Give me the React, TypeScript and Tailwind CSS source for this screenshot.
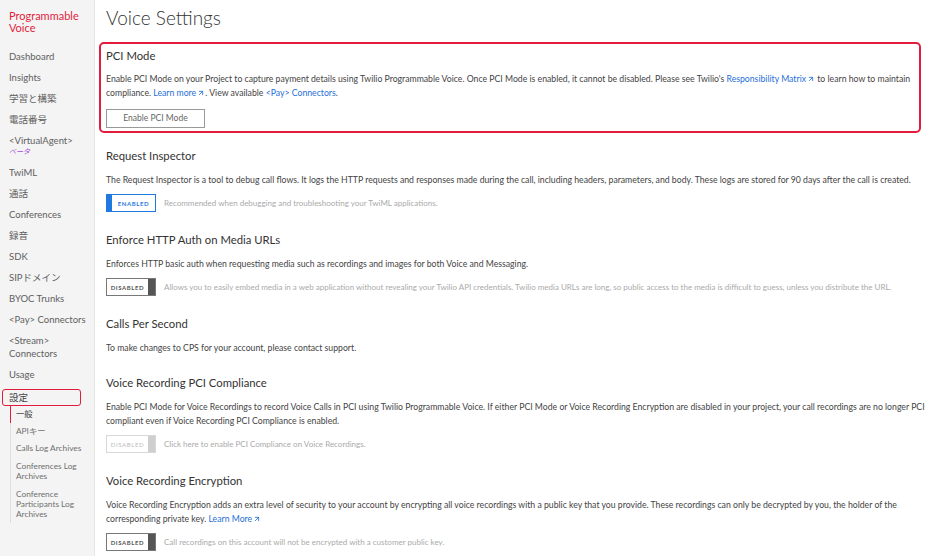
import { ArrowUpRight } from "lucide-react";
import type { ReactNode } from "react";

const font = { fontFamily: "Lato, 'Noto Sans CJK JP', sans-serif" };

type NavItem = { label: ReactNode; tall?: boolean };

const navItems: NavItem[] = [
  { label: "Dashboard" },
  { label: "Insights" },
  { label: "学習と構築" },
  { label: "電話番号" },
  {
    label: (
      <>
        <span className="block leading-[11px]">{"<VirtualAgent>"}</span>
        <span className="block leading-[11px] text-[7px] italic text-[#a34fd6]">ベータ</span>
      </>
    ),
  },
  { label: "TwiML" },
  { label: "通話" },
  { label: "Conferences" },
  { label: "録音" },
  { label: "SDK" },
  { label: "SIPドメイン" },
  { label: "BYOC Trunks" },
  { label: "<Pay> Connectors" },
  {
    label: (
      <>
        <span className="block leading-[13px]">{"<Stream>"}</span>
        <span className="block leading-[13px]">Connectors</span>
      </>
    ),
    tall: true,
  },
  { label: "Usage" },
];

const subItems = [
  ["一般"],
  ["APIキー"],
  ["Calls Log Archives"],
  ["Conferences Log", "Archives"],
  ["Conference", "Participants Log", "Archives"],
];

function Sidebar() {
  return (
    <aside className="w-[95px] shrink-0 bg-[#f4f4f4] border-r border-[#e6e6e6] min-h-[556px]">
      <div className="pt-[10px] pl-[9px] text-[11px] leading-[12px] text-[#e31c3d]">
        Programmable
        <br />
        Voice
      </div>
      <ul className="mt-[11.5px] text-[9.5px] text-[#606060]">
        {navItems.map((item, i) => (
          <li
            key={i}
            className={
              item.tall
                ? "pl-[9px] py-[4px]"
                : "pl-[9px] py-[5px] leading-[11px]"
            }
          >
            {item.label}
          </li>
        ))}
        <li className="mt-[4px] mx-[2px] w-[79px] h-[17px] leading-[15px] pl-[6px] border-[1.5px] border-[#e31c3d] rounded-[3px] text-[#444]">
          設定
        </li>
      </ul>
      <ul className="ml-[10px] border-l border-[#dedede] text-[8.3px] text-[#707070]">
        {subItems.map((lines, i) => (
          <li
            key={i}
            className={
              i === 0
                ? "pl-[5px] py-[3px] leading-[11px] border-l-[1.5px] border-[#e31c3d] -ml-px text-[#333]"
                : lines.length > 1
                  ? "pl-[5px] py-[4px] leading-[10px]"
                  : "pl-[5px] py-[3px] leading-[11px]"
            }
          >
            {lines.map((l) => (
              <span key={l} className="block">
                {l}
              </span>
            ))}
          </li>
        ))}
      </ul>
    </aside>
  );
}

function Ext({ children }: { children: ReactNode }) {
  return (
    <a className="text-[#1f6fd8] whitespace-nowrap">
      {children}
      <ArrowUpRight className="inline w-[8px] h-[8px] -mt-px ml-[1px]" strokeWidth={2.5} />
    </a>
  );
}

function Toggle({ state }: { state: "on" | "off" | "muted" }) {
  if (state === "on") {
    return (
      <div className="w-[50px] h-[18px] shrink-0 border border-[#1f7ae0] flex items-stretch">
        <div className="w-[5px] bg-[#1f7ae0]" />
        <div className="flex-1 flex items-center justify-center text-[6px] font-bold tracking-[0.6px] text-[#1f7ae0]">
          ENABLED
        </div>
      </div>
    );
  }
  const muted = state === "muted";
  return (
    <div
      className={
        muted
          ? "w-[50px] h-[18px] shrink-0 border border-[#d8d8d8] flex items-stretch"
          : "w-[50px] h-[18px] shrink-0 border border-[#777] flex items-stretch"
      }
    >
      <div
        className={
          muted
            ? "flex-1 flex items-center justify-center text-[6px] tracking-[0.6px] text-[#bbb]"
            : "flex-1 flex items-center justify-center text-[6px] font-bold tracking-[0.6px] text-[#555]"
        }
      >
        DISABLED
      </div>
      <div className={muted ? "w-[7px] bg-[#cfcfcf]" : "w-[7px] bg-[#555]"} />
    </div>
  );
}

function Section({
  title,
  children,
  toggle,
  hint,
}: {
  title: string;
  children: ReactNode;
  toggle?: "on" | "off" | "muted";
  hint?: string;
}) {
  return (
    <section className="pl-[7px] -mr-[4px] mt-[21px]">
      <h2 className="text-[11.3px] leading-[14px] text-[#333]">{title}</h2>
      <p className="mt-[10px] text-[8.7px] leading-[14px] text-[#444]">{children}</p>
      {toggle && (
        <div className="mt-[7px] flex items-center gap-[8px]">
          <Toggle state={toggle} />
          <span className="text-[8px] text-[#aaa] whitespace-nowrap">{hint}</span>
        </div>
      )}
    </section>
  );
}

export default function App() {
  return (
    <div className="flex bg-white w-[927px] h-[556px] overflow-hidden" style={font}>
      <Sidebar />
      <main className="flex-1 pl-[4px] pr-[6px]">
        <h1 className="pt-[6px] pl-[7px] text-[19px] leading-[24px] text-[#333] font-light">
          Voice Settings
        </h1>
        <div className="mt-[12px] border-2 border-[#e31c3d] rounded-[5px] px-[5px] pt-[5px] pb-[3px]">
          <h2 className="text-[11.3px] leading-[14px] text-[#333]">PCI Mode</h2>
          <p className="mt-[9px] text-[8.7px] leading-[14px] text-[#444]">
            Enable PCI Mode on your Project to capture payment details using Twilio
            Programmable Voice. Once PCI Mode is enabled, it cannot be disabled. Please see
            Twilio's <Ext>Responsibility Matrix</Ext> to learn how to maintain compliance.{" "}
            <Ext>Learn more</Ext>. View available{" "}
            <a className="text-[#1f6fd8]">{"<Pay> Connectors"}</a>.
          </p>
          <button className="mt-[9px] w-[99px] h-[19px] border border-[#999] text-[8.5px] text-[#666] bg-white">
            Enable PCI Mode
          </button>
        </div>
        <div className="-mt-[5px]">
          <Section
            title="Request Inspector"
            toggle="on"
            hint="Recommended when debugging and troubleshooting your TwiML applications."
          >
            The Request Inspector is a tool to debug call flows. It logs the HTTP requests and
            responses made during the call, including headers, parameters, and body. These logs
            are stored for 90 days after the call is created.
          </Section>
        </div>
        <Section
          title="Enforce HTTP Auth on Media URLs"
          toggle="off"
          hint="Allows you to easily embed media in a web application without revealing your Twilio API credentials. Twilio media URLs are long, so public access to the media is difficult to guess, unless you distribute the URL."
        >
          Enforces HTTP basic auth when requesting media such as recordings and images for both
          Voice and Messaging.
        </Section>
        <Section title="Calls Per Second">
          To make changes to CPS for your account, please contact support.
        </Section>
        <Section
          title="Voice Recording PCI Compliance"
          toggle="muted"
          hint="Click here to enable PCI Compliance on Voice Recordings."
        >
          Enable PCI Mode for Voice Recordings to record Voice Calls in PCI using Twilio
          Programmable Voice. If either PCI Mode or Voice Recording Encryption are disabled in
          your project, your call recordings are no longer PCI compliant even if Voice Recording
          PCI Compliance is enabled.
        </Section>
        <Section
          title="Voice Recording Encryption"
          toggle="off"
          hint="Call recordings on this account will not be encrypted with a customer public key."
        >
          Voice Recording Encryption adds an extra level of security to your account by
          encrypting all voice recordings with a public key that you provide. These recordings
          can only be decrypted by you, the holder of the corresponding private key.{" "}
          <Ext>Learn More</Ext>
        </Section>
      </main>
    </div>
  );
}
